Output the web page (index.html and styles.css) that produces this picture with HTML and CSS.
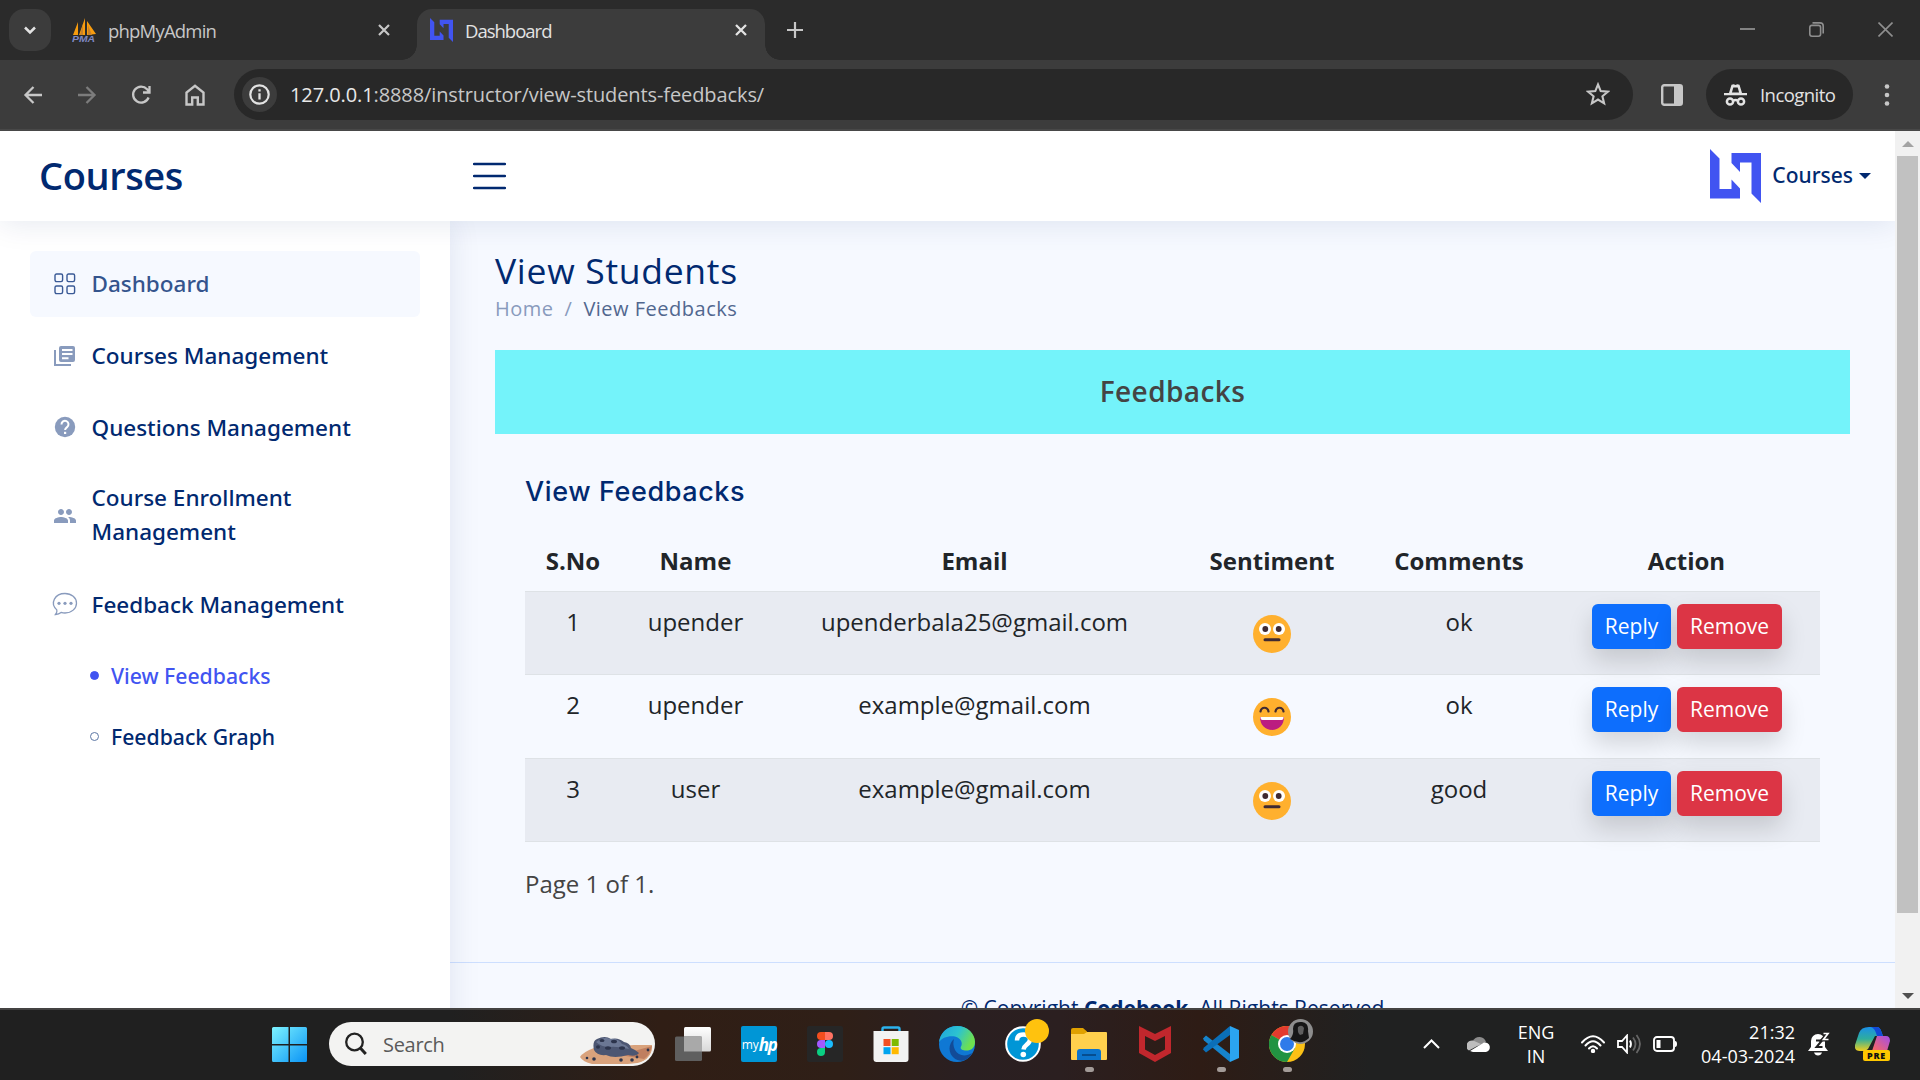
FILE: index.html
```html
<!DOCTYPE html>
<html lang="en">
<head>
<meta charset="utf-8">
<title>Dashboard</title>
<link rel="stylesheet" href="styles.css">
</head>
<body>
<svg class="defs" width="0" height="0" aria-hidden="true">
  <defs>
    <symbol id="ln" viewBox="0 0 51 54" preserveAspectRatio="none"><path fill="#4154f1" d="M0 0l9.500 9.500v30.500h12v-9.500l8.500 9v10H0zM21.500 4H51v50l-9.500-9.500V13.500H30V23l-8.500-9z"/></symbol>
    <symbol id="neutral" viewBox="0 0 38 38"><circle cx="19" cy="19" r="19" fill="#ffb02e"/><circle cx="12" cy="14" r="6" fill="#fff"/><circle cx="26" cy="14" r="6" fill="#fff"/><circle cx="12.300" cy="14" r="2.900" fill="#402a32"/><circle cx="25.700" cy="14" r="2.900" fill="#402a32"/><rect x="10.500" y="23.300" width="17" height="3" rx="1.500" fill="#402a32"/></symbol>
    <symbol id="grin" viewBox="0 0 38 38"><circle cx="19" cy="19" r="19" fill="#ffb02e"/><path d="M7.500 13.500c1-5 7-5 8 0M22.500 13.500c1-5 7-5 8 0" fill="none" stroke="#402a32" stroke-width="2.200" stroke-linecap="round"/><path d="M7 19h24c0 8-5.500 13-12 13S7 27 7 19z" fill="#bb1d80"/><path d="M7.500 19h23v1q0 2-2 2h-19q-2 0-2-2z" fill="#fff"/></symbol>
  </defs>
</svg>

<div class="tabstrip">
  <div class="tab-search"><svg width="14" height="9" viewBox="0 0 14 9"><path d="M2 1.500l5 5 5-5" fill="none" stroke="#e3e3e3" stroke-width="2.500"/></svg></div>
  <div class="tab tab-idle">
    <svg width="24" height="24" viewBox="0 0 24 24"><path d="M6 4v13H1zM13 0v17H7zM15 3l9 13-9 1z" fill="#f89c0e"/><path d="M11 6v11H8zM16 7v10h4z" fill="#c9822b"/><text x="0" y="23.500" class="pma" textLength="23" lengthAdjust="spacingAndGlyphs">PMA</text></svg>
    <span class="tab-title t-php">phpMyAdmin</span>
    <svg class="tab-x" width="12" height="12" viewBox="0 0 12 12"><path d="M1 1l10 10M11 1L1 11" stroke="#c7c7c7" stroke-width="2.200"/></svg>
  </div>
  <div class="tab tab-active">
    <svg width="23" height="24"><use href="#ln"/></svg>
    <span class="tab-title t-dash">Dashboard</span>
    <svg class="tab-x" width="12" height="12" viewBox="0 0 12 12"><path d="M1 1l10 10M11 1L1 11" stroke="#e3e3e3" stroke-width="2.300"/></svg>
  </div>
  <svg class="newtab" width="16" height="16" viewBox="0 0 16 16"><path d="M8 0v16M0 8h16" stroke="#c7c7c7" stroke-width="2.200"/></svg>
  <div class="winbtns">
    <svg width="15" height="15" viewBox="0 0 15 15"><path d="M0 7h15" stroke="#8e8e8e" stroke-width="1.800"/></svg>
    <svg width="15" height="15" viewBox="0 0 15 15" fill="none" stroke="#8e8e8e" stroke-width="1.600"><rect x=".8" y="3.400" width="10.800" height="10.800" rx="2.200"/><path d="M3.500.9h7.500a3.200 3.200 0 0 1 3.200 3.200v7.500"/></svg>
    <svg width="15" height="15" viewBox="0 0 15 15"><path d="M.5.5l14 14M14.500.5l-14 14" stroke="#8e8e8e" stroke-width="1.600"/></svg>
  </div>
</div>

<div class="toolbar">
  <div class="navbtns">
    <svg width="20" height="20" viewBox="0 0 20 20" fill="none" stroke="#c7c7c7" stroke-width="2.300"><path d="M19 10H3M10.500 2L2.500 10l8 8"/></svg>
    <svg width="20" height="20" viewBox="0 0 20 20" fill="none" stroke="#7c7c7c" stroke-width="2.300"><path d="M1 10h16M9.500 2l8 8-8 8"/></svg>
    <svg width="20" height="20" viewBox="0 0 20 20" fill="none" stroke="#c7c7c7" stroke-width="2.300"><path d="M17.600 12.500a8 8 0 1 1-1.500-8.200l2 2.200M18.500 1v6.500H12"/></svg>
    <svg width="20" height="22" viewBox="0 0 20 22" fill="none" stroke="#c7c7c7" stroke-width="2.400"><path d="M1.500 20.500V8.500L10 1.800l8.500 6.700v12h-5.700v-7H7.200v7z"/></svg>
  </div>
  <div class="omnibox">
    <span class="site"><svg width="21" height="21" viewBox="0 0 21 21"><circle cx="10.500" cy="10.500" r="9.200" fill="none" stroke="#e3e3e3" stroke-width="2.200"/><path d="M10.500 9.300v6.200M10.500 5.300v2.300" stroke="#e3e3e3" stroke-width="2.300"/></svg></span>
    <span class="url"><b>127.0.0.1</b>:8888/instructor/view-students-feedbacks/</span>
    <svg class="star" width="24" height="24" viewBox="0 0 24 24" fill="none" stroke="#c7c7c7" stroke-width="2.100"><path d="M12 2.500l2.700 6.600 7.100.6-5.400 4.600 1.700 7L12 17.500l-6.100 3.800 1.700-7-5.400-4.600 7.100-.6z"/></svg>
  </div>
  <svg class="panel" width="22" height="22" viewBox="0 0 22 22"><rect x="1.200" y="1.200" width="19.600" height="19.600" rx="2" fill="none" stroke="#c7c7c7" stroke-width="2.400"/><path d="M13 1h8v20h-8z" fill="#c7c7c7"/></svg>
  <div class="incognito">
    <svg width="23" height="22" viewBox="0 0 23 22"><path d="M0 9h5L7.500.8l2.300-.6 1.700.9 1.700-.9 2.300.6L18 9h5v2.300H0z" fill="#e3e3e3"/><path d="M9.300 3.500h4.400l1.400 5H7.900z" fill="#282828"/><g fill="none" stroke="#e3e3e3" stroke-width="2.500"><circle cx="6" cy="17.500" r="3.100"/><circle cx="17" cy="17.500" r="3.100"/><path d="M9 16.800q2.500-1.500 5 0"/></g></svg>
    <span>Incognito</span>
  </div>
  <svg class="dots" width="6" height="22" viewBox="0 0 6 22" fill="#c7c7c7"><circle cx="3" cy="2.500" r="2.300"/><circle cx="3" cy="11" r="2.300"/><circle cx="3" cy="19.500" r="2.300"/></svg>
</div>

<div class="viewport">
  <div class="page">
    <header class="header">
      <span class="brand">Courses</span>
      <svg class="burger" width="33" height="28" viewBox="0 0 33 28"><path d="M1 2h31M1 14h31M1 26h31" stroke="#012970" stroke-width="2.400" stroke-linecap="round"/></svg>
      <div class="profile"><svg width="51" height="54"><use href="#ln"/></svg><span class="pname">Courses</span><i class="caret"></i></div>
    </header>
    <div class="columns">
      <nav class="sidebar">
        <a class="link link-on"><svg width="22" height="22" viewBox="0 0 22 22" fill="none" stroke="#3a5a96" stroke-width="1.400"><rect x="1" y="1" width="7.600" height="7.600" rx="1.500"/><rect x="13" y="1" width="7.600" height="7.600" rx="1.500"/><rect x="1" y="13" width="7.600" height="7.600" rx="1.500"/><rect x="13" y="13" width="7.600" height="7.600" rx="1.500"/></svg><span>Dashboard</span></a>
        <a class="link"><svg width="22" height="22" viewBox="0 0 22 22"><path d="M1 5v15h16" fill="none" stroke="#899bbd" stroke-width="2"/><path fill="#899bbd" fill-rule="evenodd" d="M7 1h12q2 0 2 2v12q0 2-2 2H7q-2 0-2-2V3q0-2 2-2zm1 3v2h10.500V4zm0 4v2h10.500V8zm0 4.200v2h6.500v-2z"/></svg><span>Courses Management</span></a>
        <a class="link"><svg width="22" height="22" viewBox="0 0 22 22"><circle cx="11" cy="11" r="10.200" fill="#899bbd"/><path d="M7.500 8.500a3.500 3.500 0 1 1 5.600 2.600c-1.200.9-2 1.300-2 3" fill="none" stroke="#fff" stroke-width="2"/><path d="M10 15.800h2.200V18H10z" fill="#fff"/></svg><span>Questions Management</span></a>
        <a class="link link-tall"><svg width="22" height="22" viewBox="1 1 22 22"><path fill="#899bbd" d="M16 11c1.660 0 2.990-1.340 2.990-3S17.660 5 16 5s-3 1.340-3 3 1.340 3 3 3zm-8 0c1.660 0 2.990-1.340 2.990-3S9.660 5 8 5 5 6.340 5 8s1.340 3 3 3zm0 2c-2.330 0-7 1.170-7 3.500V19h14v-2.500C15 14.170 10.330 13 8 13zm8 0c-.29 0-.62.02-.97.05 1.160.84 1.970 1.970 1.970 3.450V19h6v-2.500c0-2.330-4.670-3.500-7-3.500z"/></svg><span>Course Enrollment Management</span></a>
        <a class="link"><svg width="22" height="22" viewBox="1.500 1 22 22"><path d="M3 22.500q2-2.500 1.300-4.600C-3 11 2.500 1.500 12.500 1.500c6.500 0 11.500 4.300 11.500 9.700S19 21 12.500 21q-2 0-3.900-.6-2.200 1.900-5.600 2.100z" fill="none" stroke="#899bbd" stroke-width="1.300"/><g fill="#899bbd"><circle cx="6.500" cy="11.300" r="1.600"/><circle cx="12.500" cy="11.300" r="1.600"/><circle cx="18.500" cy="11.300" r="1.600"/></g></svg><span>Feedback Management</span></a>
        <a class="sub sub-on"><i></i><span>View Feedbacks</span></a>
        <a class="sub"><i></i><span>Feedback Graph</span></a>
      </nav>
      <main class="main">
        <h1>View Students</h1>
        <div class="crumbs"><span>Home</span><span class="c-sep">/</span><span class="c-cur">View Feedbacks</span></div>
        <div class="banner"><span>Feedbacks</span></div>
        <section class="card">
          <h5>View Feedbacks</h5>
          <table>
            <colgroup><col class="w1"><col class="w2"><col class="w3"><col class="w4"><col class="w5"><col class="w6"></colgroup>
            <thead><tr><th>S.No</th><th>Name</th><th>Email</th><th>Sentiment</th><th>Comments</th><th>Action</th></tr></thead>
            <tbody>
              <tr><td>1</td><td>upender</td><td>upenderbala25@gmail.com</td><td><svg class="emoji"><use href="#neutral"/></svg></td><td>ok</td><td><div class="acts"><a class="btn reply">Reply</a><a class="btn remove">Remove</a></div></td></tr>
              <tr><td>2</td><td>upender</td><td>example@gmail.com</td><td><svg class="emoji"><use href="#grin"/></svg></td><td>ok</td><td><div class="acts"><a class="btn reply">Reply</a><a class="btn remove">Remove</a></div></td></tr>
              <tr><td>3</td><td>user</td><td>example@gmail.com</td><td><svg class="emoji"><use href="#neutral"/></svg></td><td>good</td><td><div class="acts"><a class="btn reply">Reply</a><a class="btn remove">Remove</a></div></td></tr>
            </tbody>
          </table>
          <p class="pager">Page 1 of 1.</p>
        </section>
        <footer class="footer">© Copyright <b>Codebook</b>. All Rights Reserved</footer>
      </main>
    </div>
  </div>
  <div class="scrollbar"><i class="up"></i><i class="thumb"></i><i class="down"></i></div>
</div>

<div class="taskbar">
  <svg class="start" width="35" height="35" viewBox="0 0 35 35"><defs><linearGradient id="win" x1="0" y1="0" x2="1" y2="1"><stop offset="0" stop-color="#7df3ff"/><stop offset="1" stop-color="#0a93f5"/></linearGradient></defs><path fill="url(#win)" d="M1.500 0H16.500v17H0V1.500Q0 0 1.500 0zM18 0h15.500Q35 0 35 1.500V17H18zM0 18.500h16.500V35h-15Q0 35 0 33.500zM18 18.500h17v15q0 1.500-1.500 1.500H18z"/></svg>
  <div class="search">
    <svg width="22" height="24" viewBox="0 0 22 24" fill="none" stroke="#222" stroke-width="2.300"><circle cx="9.500" cy="10" r="8.300"/><path d="M15.300 16l5.500 6" stroke-width="3"/></svg>
    <span>Search</span>
    <svg class="art" width="73" height="27" viewBox="0 0 73 27"><path d="M0 20q3-5 14-9l40-3 18 0q1 13-11 17-6 2-20 2H12Q3 25 0 20z" fill="#d9a27c"/><path d="M40 18l32-9q-2 9-8 13z" fill="#c07f60"/><path d="M14 13q-2-9 3-11 8-4 14 0 7-2 13 3 6 1 7 6 5 2 8 5-3 4-11 2-14 4-22 0-9 1-12-5z" fill="#4c5672"/><path d="M16 5q8-6 14-3 8-1 12 5 5 1 7 5-14-3-19-2-9 0-14-5z" fill="#6b7794"/><g fill="#2c344c"><ellipse cx="22" cy="3.500" rx="2.500" ry="1.500"/><ellipse cx="34" cy="4.500" rx="3" ry="1.800"/><ellipse cx="28" cy="11" rx="3" ry="1.800"/><ellipse cx="42" cy="11" rx="3" ry="1.800"/><ellipse cx="18" cy="10" rx="2" ry="1.800"/><circle cx="14" cy="22" r="1.800"/><circle cx="7" cy="21" r="1.300"/><circle cx="41" cy="23" r="1.800"/><circle cx="52" cy="23" r="1.800"/><circle cx="57" cy="20" r="1.400"/><circle cx="68" cy="13" r="1.400"/></g></svg>
  </div>
  <div class="apps">
    <span><svg width="36" height="34" viewBox="0 0 36 34"><defs><linearGradient id="tv" x1="0" y1="0" x2="0" y2="1"><stop offset="0" stop-color="#fff"/><stop offset="1" stop-color="#d8d8d8"/></linearGradient></defs><rect x="9" width="27" height="24.500" rx="1.500" fill="url(#tv)"/><rect y="9.500" width="27" height="24.500" rx="1.500" fill="#5f5f5f"/><path d="M9 9.500h18v15H9z" fill="#a9a9a9"/></svg></span>
    <span><b class="hp"><em class="my">my</em><em class="h">hp</em></b></span>
    <span><b class="figma"><svg width="16" height="24" viewBox="0 0 16 24"><path d="M4 0h4v8H4a4 4 0 0 1 0-8z" fill="#f24e1e"/><path d="M8 0h4a4 4 0 0 1 0 8H8z" fill="#ff7262"/><path d="M4 8h4v8H4a4 4 0 0 1 0-8z" fill="#a259ff"/><circle cx="12" cy="12" r="4" fill="#1abcfe"/><path d="M4 16h4v4a4 4 0 1 1-4-4z" fill="#0acf83"/></svg></b></span>
    <span><svg width="36" height="36" viewBox="0 0 36 36"><path d="M9.500 7V3q0-1.500 1.500-1.500h14q1.500 0 1.500 1.500v4" fill="none" stroke="#2bb3ee" stroke-width="2.400"/><path d="M.5 5h35v28q0 3-3 3h-29q-3 0-3-3z" fill="#f2f2f2"/><path d="M10.500 13h7v7h-7z" fill="#f25022"/><path d="M18.700 13h7v7h-7z" fill="#7fba00"/><path d="M10.500 21.200h7v7h-7z" fill="#00a4ef"/><path d="M18.700 21.200h7v7h-7z" fill="#ffb900"/></svg></span>
    <span><svg width="36" height="36" viewBox="0 0 36 36"><defs><linearGradient id="e1" x1="0" y1="0" x2="1" y2=".4"><stop offset="0" stop-color="#1ea3e0"/><stop offset=".55" stop-color="#2cc3d0"/><stop offset="1" stop-color="#6ee04f"/></linearGradient></defs><circle cx="18" cy="18" r="18" fill="#0f78d4"/><path d="M0 16.500C1 6.500 8.500 0 18 0c10.500 0 18 7.500 18 16 0 6-4 8.500-8.500 8.500-4 0-7-1.500-5.500-4 2-3.500 0-8.500-6-10C9.500 9.500 2.500 11.500 0 16.500z" fill="url(#e1)"/><path d="M15 13c-6 5-6 14 0 19 3 2.500 8 3.500 11 2 4-2 6-4.500 7-7-6 4-14 3-17-3-2-4-2-8-1-11z" fill="#124b98"/></svg></span>
    <span><svg width="36" height="36" viewBox="0 0 36 36"><circle cx="18" cy="18" r="16.800" fill="#0096d6" stroke="#fff" stroke-width="2"/><path d="M12 14.500q0-6 6.500-6t6.500 5c0 5-6 5-6.500 10" fill="none" stroke="#fff" stroke-width="4.500"/><circle cx="18.300" cy="28.500" r="2.800" fill="#fff"/></svg><i class="badge"></i></span>
    <span class="run"><svg width="36" height="36" viewBox="0 0 36 36"><path d="M0 4q0-2 2-2h10l4 3.500V9H0z" fill="#e0a100"/><path d="M0 8h13l3-2h19q1 0 1 1v26q0 1-1 1H1q-1 0-1-1z" fill="#ffd04d"/><path d="M6 34V26q0-3 3-3h18q3 0 3 3v8z" fill="#0c74cc"/><path d="M11 29h14" stroke="#064d8f" stroke-width="2"/></svg></span>
    <span><svg width="32" height="36" viewBox="0 0 32 36"><path fill="#c1272d" fill-rule="evenodd" d="M0 0l16 8 16-8v27l-16 9L0 27zm6 10v13.500l10 5.500 10-5.500V10l-10 5z"/></svg></span>
    <span class="run"><svg width="36" height="36" viewBox="0 0 36 36"><path d="M0 12.500l3-3L27 28v8L1 14.500z" fill="#1684cc"/><path d="M0 23.500l3 3L27 9V0L1 21.500z" fill="#0b6fb8"/><path d="M27 0l9 4v28l-9 4z" fill="#2ba4f0"/></svg></span>
    <span class="run"><svg width="36" height="36" viewBox="0 0 36 36"><circle cx="18" cy="18" r="18" fill="#fbc116"/><path d="M18 18L2.400 9A18 18 0 0 1 33.600 9z" fill="#e33b2e"/><path d="M2.400 9A18 18 0 0 0 18 36l8-14-8-4z" fill="#229342"/><circle cx="18" cy="18" r="9" fill="#fff"/><circle cx="18" cy="18" r="7" fill="#2f7bea"/></svg><svg class="avatar" width="25" height="25" viewBox="0 0 25 25"><circle cx="12.500" cy="12.500" r="12.500" fill="#8d8d8d"/><path d="M5 10q0-8 9-7 7 1 6 9l1 7q-8 8-19 1 4-4 3-10z" fill="#161616"/><path d="M10 8q4-3 6 1l-1 6-3 1q-3-3-2-8z" fill="#5e5e5e"/></svg></span>
  </div>
  <div class="tray">
    <svg width="17" height="10" viewBox="0 0 17 10"><path d="M1 9l7.500-7.500L16 9" fill="none" stroke="#fff" stroke-width="2"/></svg>
    <svg class="cloud" width="24" height="16" viewBox="0 0 24 16"><path d="M6 5a7 7 0 0 1 13 1l-8 4z" fill="#8c8c8c"/><path d="M6 4.500a6 5.500 0 0 0-4 10L14 8z" fill="#bdbdbd"/><path d="M3 15l14-8.500a4.800 4.800 0 0 1 2 9.500H6z" fill="#fff"/></svg>
    <div class="lang">ENG<br>IN</div>
    <svg class="wifi" width="24" height="18" viewBox="0 0 24 18" fill="none" stroke="#fff" stroke-width="2" stroke-linecap="round"><path d="M1 7.500q11-12.500 22 0M4.500 10.500q7.500-8.500 15 0M8 13.500q4-4.500 8 0"/><circle cx="12" cy="16" r="1.200" fill="#fff"/></svg>
    <svg class="vol" width="24" height="20" viewBox="0 0 24 20" fill="none" stroke="#fff" stroke-width="1.800"><path d="M1 7h4l5-5.500v17L5 13H1z"/><path d="M13 6.500q2 3.500 0 7"/><path d="M16 3.500q5 6.500 0 13M19.500 1q7 9 0 18" stroke="#666"/></svg>
    <svg class="bat" width="24" height="16" viewBox="0 0 24 16"><rect x="1" y="1" width="20" height="14" rx="3" fill="none" stroke="#fff" stroke-width="1.900"/><path d="M3.500 4h4v8h-4zM22 5q2 0 2 3t-2 3z" fill="#fff"/></svg>
    <div class="clock">21:32<br>04-03-2024</div>
    <svg class="bell" width="22" height="24" viewBox="0 0 22 24"><path d="M3 15V9a7 7 0 0 1 14 0v6l3 4H0z" fill="#fff"/><path d="M6 20.500h8q-1 3-4 3t-4-3z" fill="#fff"/><path d="M8 8.500h6l-5.500 6.500h6" fill="none" stroke="#202020" stroke-width="2"/><path d="M15 1.500h5l-5 6h5.500" fill="none" stroke="#202020" stroke-width="4"/><path d="M15.500 1.500H20l-4.500 6h5" fill="none" stroke="#fff" stroke-width="1.700"/></svg>
    <div class="copilot"><svg width="35" height="24" viewBox="0 0 35 24"><defs><linearGradient id="c1" x1="0" y1="0" x2="0" y2="1"><stop offset="0" stop-color="#1a8fe8"/><stop offset=".5" stop-color="#2fae9c"/><stop offset="1" stop-color="#f2cf1d"/></linearGradient><linearGradient id="c2" x1="1" y1="0" x2="0" y2="1"><stop offset="0" stop-color="#a24de8"/><stop offset="1" stop-color="#ff6a5a"/></linearGradient></defs><path d="M14 0h8q3 0 4.500 5L28 9h-8l-7 13-3 2H5q-6 0-5-6L4 6q2-6 10-6z" fill="url(#c1)"/><path d="M16 0h6q3 0 4.500 5L28 9h-6q-2-8-6-9z" fill="#1249d6"/><path d="M22 9h9q4 0 4 5l-3 10H17z" fill="url(#c2)"/></svg><b>PRE</b></div>
  </div>
</div>
</body>
</html>
```
FILE: styles.css
```css
* { box-sizing: border-box; }
body { margin: 0; width: 1920px; height: 1080px; overflow: hidden; display: flex; flex-direction: column; background: #3c3c3c; font-family: "Open Sans", sans-serif; }
.defs { position: absolute; }
svg { flex: none; display: block; }
h1, h5, p { margin: 0; }

/* browser chrome */
.tabstrip { height: 60px; flex: none; background: #2b2b2b; display: flex; align-items: flex-start; color: #c7c7c7; font-size: 18.500px; padding-left: 9px; }
.tab-search { width: 42px; height: 42px; margin-top: 9px; border-radius: 15px; background: #3c3c3c; display: flex; align-items: center; justify-content: center; }
.tab { display: flex; align-items: center; height: 51px; margin-top: 9px; padding-bottom: 9px; }
.tab-idle { width: 366px; padding-left: 21px; }
.tab-title { margin-left: 12px; padding-top: 1px; white-space: nowrap; line-height: 24px; }
.t-php { letter-spacing: -.8px; }
.t-dash { letter-spacing: -1px; }
.tab-x { margin-left: auto; }
.tab-idle .tab-x { margin-right: 27px; }
.tab-active { width: 348px; background: #3c3c3c; border-radius: 15px 15px 0 0; padding-left: 13px; color: #e3e3e3; position: relative; }
.tab-active .tab-x { margin-right: 18px; }
.tab-active::before, .tab-active::after { content: ""; position: absolute; bottom: 0; width: 15px; height: 15px; }
.tab-active::before { left: -15px; background: radial-gradient(circle at 0 0, #2b2b2b 14.500px, #3c3c3c 15px); }
.tab-active::after { right: -15px; background: radial-gradient(circle at 100% 0, #2b2b2b 14.500px, #3c3c3c 15px); }
.pma { font: italic bold 9px "Liberation Sans", sans-serif; fill: #7f88c4; }
.newtab { margin: 22px 0 0 22px; }
.winbtns { margin: 22px 27px 0 auto; display: flex; gap: 54px; }
.toolbar { height: 71px; flex: none; background: #3c3c3c; border-bottom: 2px solid #484848; display: flex; align-items: center; padding-left: 23px; }
.navbtns { display: flex; gap: 34px; align-items: center; width: 211px; }
.omnibox { width: 1399px; height: 51px; border-radius: 26px; background: #282828; display: flex; align-items: center; padding: 0 23px 0 8px; color: #c7c7c7; font-size: 20px; }
.site { width: 35px; height: 35px; border-radius: 50%; background: #3c3c3c; display: flex; align-items: center; justify-content: center; }
.url { margin: 0 auto 0 13px; letter-spacing: -.1px; }
.star { margin-bottom: 1px; }
.url b { font-weight: 400; color: #e8e8e8; }
.panel { margin-left: 28px; }
.incognito { width: 147px; height: 51px; margin-left: 23px; border-radius: 26px; background: #282828; color: #e3e3e3; font-size: 18.500px; letter-spacing: -.55px; display: flex; align-items: center; padding-left: 18px; gap: 13px; }
.dots { margin-left: 31px; }

/* page */
.viewport { height: 877px; flex: none; display: flex; overflow: hidden; }
.page { width: 1895px; height: 877px; overflow: hidden; background: #f6f9ff; }
.header { height: 90px; background: #fff; box-shadow: 0 3px 30px rgba(1,41,112,.1); position: relative; z-index: 2; display: flex; align-items: center; padding: 0 24px 0 39px; color: #012970; }
.brand { width: 434px; font-weight: 600; font-size: 38px; letter-spacing: -.4px; line-height: 52px; padding-bottom: 3px; }
.profile { margin-left: auto; display: flex; align-items: center; font: 500 21px/30px "Noto Sans", sans-serif; }
.pname { margin: -2px 0 0 11px; }
.caret { margin-left: 6px; border: 6px solid transparent; border-top-color: #012970; border-bottom: 0; }
.columns { display: flex; height: 1100px; }
.sidebar { width: 450px; background: #fff; padding: 30px 30px 0; box-shadow: 0 0 30px rgba(1,41,112,.1); position: relative; z-index: 1; font-family: "Noto Sans", sans-serif; font-weight: 500; }
.link { display: flex; align-items: center; height: 66px; margin-bottom: 5.500px; border-radius: 6px; color: #012970; font-size: 22.500px; line-height: 34px; padding-left: 23.500px; }
.link svg { margin-right: 16px; overflow: visible; }
.link span { margin-top: 1px; }
.link-on { background: #f6f9ff; color: #34548d; }
.link-on span { margin-top: -1px; }
.link-tall { height: 100px; padding-right: 90px; }
.link-tall span { margin-top: -1px; }
.sub { display: flex; align-items: center; height: 61px; padding-left: 60px; color: #012970; font-size: 21.200px; }
.sub i { width: 9px; height: 9px; border: 1px solid #5d77a5; border-radius: 50%; margin-right: 12px; }
.sub-on { color: #4154f1; margin-top: 8px; }
.sub-on i { background: #4154f1; border-color: #4154f1; }
.main { flex: 1; }
.main h1 { margin: 26px 0 1px 45px; font-size: 35.500px; letter-spacing: .7px; line-height: 46px; font-weight: 500; color: #012970; }
.crumbs { margin-left: 45px; display: flex; font-size: 20px; letter-spacing: .5px; line-height: 30px; font-weight: 500; color: #899bbd; }
.c-sep { margin: 0 11px; }
.c-cur { color: #51678f; }
.banner { margin: 26px 45px 0; height: 84px; padding-bottom: 3px; background: #74f3fa; display: flex; align-items: center; justify-content: center; color: #444; font-size: 28px; letter-spacing: .4px; font-weight: 600; }
.card { margin: 0 75px; height: 528px; }
.card h5 { padding-top: 37px; height: 105px; font: 500 27px/42px Inter, "Open Sans", sans-serif; letter-spacing: .6px; color: #012970; }
table { width: 1295px; border-collapse: collapse; table-layout: fixed; font-size: 24px; line-height: 36px; color: #212529; }
.w1 { width: 96px; } .w2 { width: 149px; } .w3 { width: 409px; } .w4 { width: 186px; } .w5 { width: 188px; } .w6 { width: 267px; }
th { height: 52px; padding: 4px 0 12px; font-weight: 700; }
th, td { text-align: center; vertical-align: top; border-bottom: 1px solid #dee2e6; }
td { height: 83px; padding: 12px 0 0; }
tbody tr:nth-child(even) td { height: 84px; }
tbody tr:nth-child(odd) { background: #e8ebf2; }
.emoji { width: 38px; height: 38px; margin: 11px auto 0; }
.acts { display: flex; gap: 6px; padding-left: 39px; }
.btn { height: 45px; border-radius: 6px; color: #fff; font-size: 21px; line-height: 44px; box-shadow: 0 12px 24px rgba(0,0,0,.15); }
.reply { width: 79px; background: #0d6efd; }
.remove { width: 105px; background: #dc3545; }
.pager { margin-top: 24px; font-size: 24px; line-height: 36px; color: #444; }
.footer { border-top: 1px solid #cddfff; padding-top: 30px; text-align: center; font-size: 21px; line-height: 30px; color: #012970; }
.scrollbar { width: 25px; background: #f1f1f1; display: flex; flex-direction: column; align-items: center; }
.up { border: 6px solid transparent; border-bottom-color: #a3a3a3; border-top: 0; margin-top: 10px; }
.thumb { width: 21px; height: 757px; margin-top: 9px; background: #c1c1c1; }
.down { border: 6px solid transparent; border-top-color: #505050; border-bottom: 0; margin-top: 80px; }

/* taskbar */
.taskbar { height: 72px; flex: none; border-top: 2px solid #444342; display: flex; align-items: center; color: #fff; background: linear-gradient(90deg, #202020 450px, #301e15 660px, #2f1f17 840px, #2a1f21 960px, #2b1f20 1060px, #2e1c15 1200px, #202121 1370px); }
.start { margin: -1px 0 0 272px; }
.search { width: 326px; height: 44px; margin: -2px 5px 0 22px; border-radius: 22px; background: #f3f3f2; display: flex; align-items: center; padding-left: 16px; color: #5a5a5a; font-size: 20px; letter-spacing: -.3px; }
.search span { margin-left: 16px; }
.art { margin: 13px 2px 0 auto; border-bottom-right-radius: 20px; }
.apps { display: flex; height: 70px; }
.apps > span { width: 66px; display: flex; align-items: center; justify-content: center; position: relative; padding-bottom: 2px; }
.run::after { content: ""; position: absolute; left: 29px; top: 57px; width: 9px; height: 5px; border-radius: 3px; background: #a39b98; }
.hp { width: 36px; height: 36px; background: #0096d6; border-radius: 2px; display: flex; align-items: center; justify-content: center; line-height: 30px; }
.my { font: 12px "Open Sans", sans-serif; }
.h { font: italic 700 17px "Open Sans", sans-serif; letter-spacing: -1.500px; }
.figma { width: 36px; height: 36px; background: #262626; border-radius: 2px; display: flex; align-items: center; justify-content: center; }
.badge { position: absolute; left: 35px; top: 9px; width: 24px; height: 24px; border-radius: 50%; background: #ffc20e; }
.avatar { position: absolute; left: 34px; top: 9px; }
.tray { display: flex; align-items: center; margin-left: 103px; height: 70px; font-size: 18px; line-height: 24px; padding-bottom: 2px; }
.cloud { margin-left: 27px; }
.lang { width: 60px; margin-left: 15px; text-align: center; }
.wifi { margin-left: 15px; }
.vol { margin-left: 12px; }
.bat { margin-left: 12px; }
.clock { width: 118px; text-align: right; }
.bell { margin-left: 13px; }
.copilot { margin-left: 25px; width: 35px; height: 34px; display: flex; flex-direction: column; }
.copilot b { width: 27px; height: 11px; margin: -1px 0 0 8px; background: #ffc800; color: #111; border-radius: 2px; font: 800 9px/11px "Open Sans", sans-serif; letter-spacing: .8px; text-align: center; position: relative; }
```
